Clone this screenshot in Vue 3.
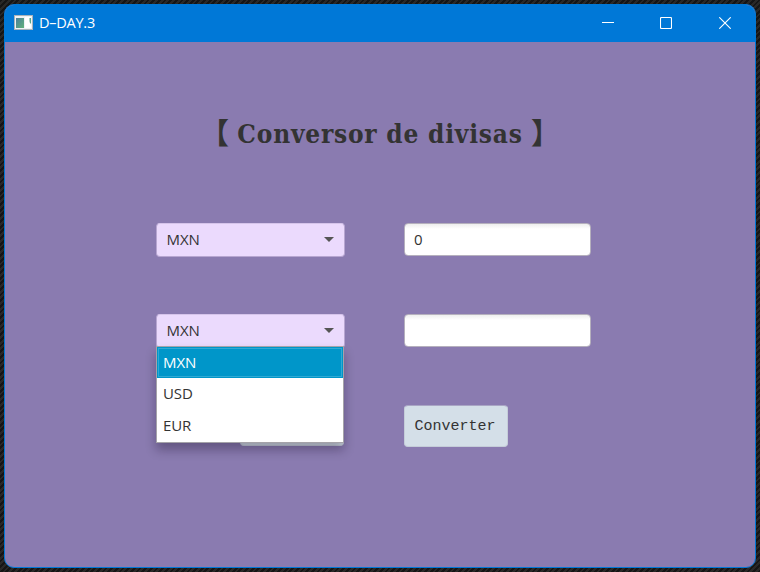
<script setup>
import { ref } from 'vue'

const currencies = ['MXN', 'USD', 'EUR']
const from = ref('MXN')
const to = ref('MXN')
const amount = ref('0')
const result = ref('')
</script>

<template>
  <div class="desktop">
    <div class="window">
      <header class="titlebar">
        <svg class="app-icon" width="19" height="16" viewBox="0 0 19 16">
          <defs>
            <linearGradient id="pic" x1="0" y1="0" x2="1" y2="1">
              <stop offset="0" stop-color="#4a7f9c" />
              <stop offset="1" stop-color="#62b27a" />
            </linearGradient>
          </defs>
          <rect x="0.5" y="0.5" width="18" height="14" fill="#eef2f4" stroke="#a9b3ba" />
          <rect x="2" y="3" width="8" height="10" fill="url(#pic)" />
          <rect x="11" y="2" width="6" height="11" fill="#fff" />
          <path d="M15.500 3H17v6q-1.500-1-1.500-3z" fill="#58a58c" />
        </svg>
        <span class="title">D–DAY.3</span>
        <div class="controls">
          <svg width="12" height="12" viewBox="0 0 12 12"><path d="M0 5.500h12" /></svg>
          <svg class="maximize" width="12" height="12" viewBox="0 0 12 12"><rect x="0.5" y="0.5" width="11" height="11" rx="1" /></svg>
          <svg width="12" height="12" viewBox="0 0 12 12"><path d="M0.3 0.3l11.4 11.4M11.7 0.3L0.3 11.7" /></svg>
        </div>
      </header>
      <main class="content">
        <h1><span class="bracket open">【</span><span class="heading">Conversor de divisas</span><span class="bracket close">】</span></h1>
        <div class="form">
          <div class="combo">
            <span>{{ from }}</span>
            <svg width="10" height="5" viewBox="0 0 10 5"><path d="M0 0h10L5 5z" fill="#555" /></svg>
          </div>
          <div class="field">{{ amount }}</div>
          <div class="combo opened">
            <span>{{ to }}</span>
            <svg width="10" height="5" viewBox="0 0 10 5"><path d="M0 0h10L5 5z" fill="#555" /></svg>
            <ul class="popup">
              <li v-for="c in currencies" :key="c" :class="{ selected: c === to }">{{ c }}</li>
            </ul>
          </div>
          <div class="field">{{ result }}</div>
          <div class="button clear"></div>
          <div class="button">Converter</div>
        </div>
      </main>
    </div>
  </div>
</template>

<style>
body {
  margin: 0;
}
</style>

<style scoped>
* {
  box-sizing: border-box;
}
.desktop {
  width: 760px;
  height: 572px;
  padding: 4px;
  background: repeating-linear-gradient(135deg, #151515 0 2px, #292827 2px 4px);
  font-family: "Open Sans", "Noto Sans", sans-serif;
  color: #333;
}
.window {
  width: 752px;
  height: 564px;
  border: 1px solid #0078d7;
  border-radius: 10px;
  background: #8a7bb0;
  overflow: hidden;
}
.titlebar {
  height: 37px;
  display: flex;
  align-items: center;
  padding: 0 24px 1px 9px;
  background: #0078d7;
  color: #fff;
}
.title {
  margin-left: 6px;
  font-size: 14.5px;
  line-height: 20px;
  letter-spacing: -0.25px;
}
.controls {
  display: flex;
  gap: 46px;
  margin-left: auto;
}
.controls svg {
  display: block;
  fill: none;
  stroke: #fff;
  stroke-width: 1.1;
}
.controls .maximize {
  margin-right: 1px;
}
h1 {
  margin: 0;
  padding-top: 72px;
  height: 181px;
  display: flex;
  justify-content: center;
  font-size: 26px;
  line-height: 38px;
  white-space: nowrap;
}
.heading {
  width: 286px;
  padding-top: 1px;
  font-family: "DejaVu Serif Condensed", "DejaVu Serif", serif;
  font-stretch: condensed;
  letter-spacing: 0.77px;
  text-align: center;
}
.bracket {
  width: 29px;
  font-family: "Noto Sans CJK JP", sans-serif;
  font-size: 29px;
  font-weight: 700;
  line-height: 34px;
}
.open {
  margin-right: 8px;
}
.close {
  margin-left: 8px;
}
.form {
  display: grid;
  grid-template-columns: 189px 187px;
  grid-template-rows: 34px 34px 42px;
  column-gap: 59px;
  row-gap: 57px;
  padding-left: 151px;
  font-size: 15px;
}
.combo {
  position: relative;
  display: flex;
  align-items: center;
  justify-content: space-between;
  height: 34px;
  padding: 0 10px 1px 9.5px;
  border: 1px solid #b7a6d1;
  border-top-color: #d5c4ea;
  border-radius: 4px;
  background: #ebdafd;
  letter-spacing: -0.1px;
}
.combo > span {
  line-height: 20px;
  margin-top: -1px;
}
.field {
  height: 33px;
  padding: 0 9px;
  line-height: 31px;
  border: 1px solid #b5b0bd;
  border-radius: 4px;
  background: linear-gradient(#eeeeee, #fff 5px);
}
.popup {
  position: absolute;
  z-index: 1;
  left: -1px;
  top: 31px;
  width: 188px;
  height: 97px;
  margin: 0;
  padding: 0;
  list-style: none;
  border: 1px solid #a5a3a9;
  background: #fff;
  box-shadow: 0 7px 10px rgba(20, 10, 35, 0.32);
}
.popup li {
  height: 32px;
  padding-left: 6px;
  line-height: 31px;
}
.popup .selected {
  color: #fff;
  background: #0096c9;
  border: 1px solid #0096c9;
  padding-left: 5px;
  line-height: 29px;
  height: 31px;
  box-shadow: inset 0 0 0 1px #30a9d3;
}
.button {
  width: 104px;
  height: 42px;
  border: 1px solid #c5cdd9;
  border-top-color: #a9a5c4;
  border-radius: 4px;
  background: #d4dfe8;
  font-family: "Liberation Mono", monospace;
  font-size: 15px;
  line-height: 41px;
  padding-right: 2px;
  text-align: center;
}
.clear {
  height: 41px;
  justify-self: end;
  margin-right: 1px;
}
</style>
